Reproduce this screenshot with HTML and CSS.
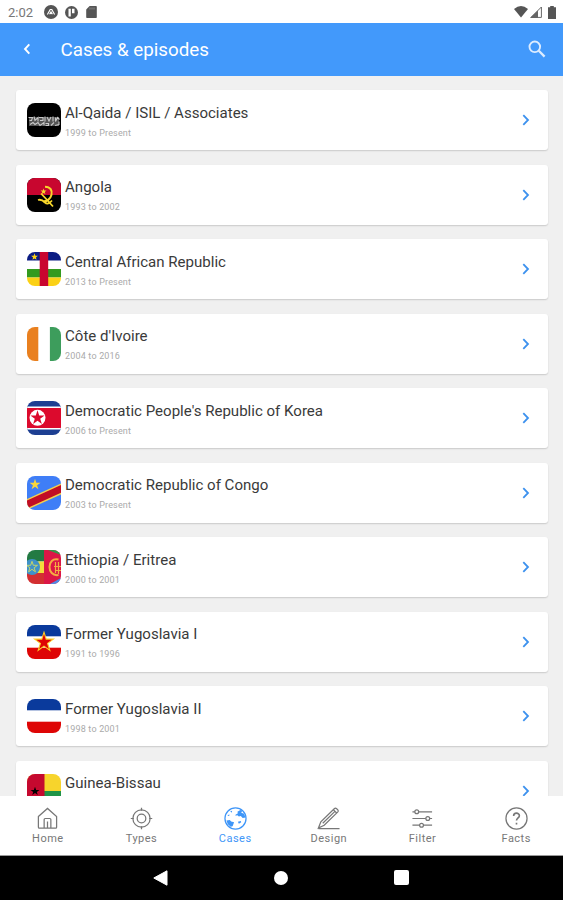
FILE: index.html
```
<!DOCTYPE html>
<html lang="en">
<head>
  <meta charset="UTF-8" />
  <meta name="viewport" content="width=device-width, initial-scale=1.0"/>
  <title>Cases &amp; episodes</title>
  <link rel="stylesheet" href="styles.css">
</head>
<body>
  <div class="app">
    <!-- Status bar -->
    <div class="status-bar">
      <span class="time">2:02</span>
      <svg class="status-icon" width="14" height="14" viewBox="0 0 14 14">
        <circle cx="7" cy="7" r="7" fill="#555"/>
        <path d="M3.400 9.500 6.200 4.500h1.600l2.800 5M5.600 9.300 7 7l1.400 2.300" fill="none" stroke="#fff" stroke-width="1.200"/>
      </svg>
      <svg class="status-icon" width="13" height="13" viewBox="0 0 13 13">
        <circle cx="6.500" cy="6.500" r="6.500" fill="#555"/>
        <path d="M3.500 2.800h2.300v7.700H3.500zM7 2.800h2.500v4.400H7z" fill="#fff"/>
      </svg>
      <svg class="status-icon" width="11" height="12" viewBox="0 0 11 12">
        <path d="M3.600 0H10a.8.8 0 0 1 .8.8v10.400a.8.8 0 0 1-.8.8H1a.8.8 0 0 1-.8-.8V3.500z" fill="#555"/>
        <path d="M4 1.500v2M6 1.500v2M8 1.500v2" stroke="#999" stroke-width=".8"/>
      </svg>
      <div class="status-right">
        <svg width="14" height="12" viewBox="0 0 14 12"><path d="M0 3Q7-3 14 3L7 11.500z" fill="#555"/></svg>
        <svg width="12" height="12" viewBox="0 0 12 12">
          <path d="M11.400 1v10.400H1z" fill="none" stroke="#666" stroke-width="1"/>
          <path d="M8 4.500V12H0z" fill="#666"/>
        </svg>
        <svg width="8" height="13" viewBox="0 0 8 13"><path d="M2.200 0h3.600v1.200H8V13H0V1.200h2.200z" fill="#555"/></svg>
      </div>
    </div>

    <header class="header">
      <svg class="back" width="8" height="12" viewBox="0 0 8 12"><path d="M6.300 1.300 2 6l4.300 4.700" fill="none" stroke="#fff" stroke-width="1.900"/></svg>
      <h1>Cases &amp; episodes</h1>
      <svg class="search" width="18" height="18" viewBox="0 0 18 18" fill="none" stroke="#dcecff">
        <circle cx="6.800" cy="6.800" r="5.300" stroke-width="1.900"/>
        <path d="m10.800 10.800 5.800 5.800" stroke-width="2.300"/>
      </svg>
    </header>

    <main class="list">
      <div class="card">
        <svg class="flag" viewBox="0 0 34 34">
          <rect width="34" height="34" fill="#000"/>
          <rect x="2" y="14" width="30" height="9" fill="#555"/>
          <g fill="none" stroke="#c8c8c8" stroke-width="1.100">
            <path d="M1.500 14.500h4l-1 3h-2M7 13.500l1 4 3-3v4M12 14.500h4v3h-3M18 13.500v5M20 14l2 4 2-4M26 13.500v5M28.500 14.500v4l2-4 2 2"/>
            <path d="M3 21.500l3-2 2 2 3-2 2 3 4-3v3M18.500 20.500h3v2h-3M24 22.500l3-3M28 22.500l4-1v-3"/>
          </g>
        </svg>
        <div class="info"><h2>Al-Qaida / ISIL / Associates</h2><p>1999 to Present</p></div>
        <svg class="chevron" viewBox="0 0 8 12"><path d="m1.300 1.200 4.700 4.800-4.700 4.800"/></svg>
      </div>

      <div class="card">
        <svg class="flag" viewBox="0 0 34 34">
          <rect width="34" height="34" fill="#000"/>
          <rect width="34" height="17" fill="#c8062f"/>
          <path d="M18 8.700c5.500 0 7.500 4 6.500 8s-4.500 7-8 6.500" fill="none" stroke="#f8d62a" stroke-width="2"/>
          <path d="M14 15.500l9 9.500M11 22c3-1 5 .5 7 2.500s4.500 1 7-2M21 23l5 5.500" fill="none" stroke="#f8d62a" stroke-width="1.800"/>
          <path d="m16.500 10.500.8 2 2.200.1-1.700 1.400.6 2.100-1.900-1.200-1.800 1.200.6-2.100-1.700-1.400 2.200-.1z" fill="#f8d62a"/>
        </svg>
        <div class="info"><h2>Angola</h2><p>1993 to 2002</p></div>
        <svg class="chevron" viewBox="0 0 8 12"><path d="m1.300 1.200 4.700 4.800-4.700 4.800"/></svg>
      </div>

      <div class="card">
        <svg class="flag" viewBox="0 0 34 34">
          <rect width="34" height="34" fill="#fff"/>
          <rect width="34" height="8.500" fill="#0b1c83"/>
          <rect y="17" width="34" height="8.500" fill="#339a1f"/>
          <rect y="25.500" width="34" height="8.500" fill="#fbd116"/>
          <rect x="12.700" width="8.500" height="34" fill="#c9052f"/>
          <path d="m7.500 1.300.9 2.400 2.500.1-2 1.600.7 2.400-2.100-1.400-2.100 1.400.7-2.400-2-1.600 2.500-.1z" fill="#fbd116"/>
        </svg>
        <div class="info"><h2>Central African Republic</h2><p>2013 to Present</p></div>
        <svg class="chevron" viewBox="0 0 8 12"><path d="m1.300 1.200 4.700 4.800-4.700 4.800"/></svg>
      </div>

      <div class="card">
        <svg class="flag" viewBox="0 0 34 34">
          <rect width="34" height="34" fill="#fff"/>
          <rect width="11.300" height="34" fill="#e9801f"/>
          <rect x="22.900" width="11.100" height="34" fill="#3d9d5c"/>
        </svg>
        <div class="info"><h2>Côte d'Ivoire</h2><p>2004 to 2016</p></div>
        <svg class="chevron" viewBox="0 0 8 12"><path d="m1.300 1.200 4.700 4.800-4.700 4.800"/></svg>
      </div>

      <div class="card">
        <svg class="flag" viewBox="0 0 34 34">
          <rect width="34" height="34" fill="#1d3f92"/>
          <rect y="5.500" width="34" height="23" fill="#fff"/>
          <rect y="7" width="34" height="20" fill="#dc0a2d"/>
          <circle cx="10.500" cy="16.800" r="8" fill="#fff"/>
          <path d="m10.500 9.300 1.700 5.200h5.400l-4.400 3.200 1.700 5.200-4.400-3.200-4.400 3.200 1.700-5.200-4.400-3.200h5.400z" fill="#dc0a2d"/>
        </svg>
        <div class="info"><h2>Democratic People's Republic of Korea</h2><p>2006 to Present</p></div>
        <svg class="chevron" viewBox="0 0 8 12"><path d="m1.300 1.200 4.700 4.800-4.700 4.800"/></svg>
      </div>

      <div class="card">
        <svg class="flag" viewBox="0 0 34 34">
          <rect width="34" height="34" fill="#3f7ef7"/>
          <path d="M-2 29.300 36 12" stroke="#f3d04e" stroke-width="10"/>
          <path d="M-2 29.300 36 12" stroke="#c10d25" stroke-width="7"/>
          <path d="m8 2.800 1.300 4h4.200l-3.400 2.500 1.300 4-3.400-2.500-3.400 2.500 1.300-4-3.400-2.500h4.200z" fill="#f9d63c"/>
        </svg>
        <div class="info"><h2>Democratic Republic of Congo</h2><p>2003 to Present</p></div>
        <svg class="chevron" viewBox="0 0 8 12"><path d="m1.300 1.200 4.700 4.800-4.700 4.800"/></svg>
      </div>

      <div class="card">
        <svg class="flag" viewBox="0 0 34 34">
          <rect width="17" height="11.500" fill="#237a43"/>
          <rect y="11.500" width="17" height="11.500" fill="#f4dc3c"/>
          <rect y="23" width="17" height="11" fill="#d32f31"/>
          <circle cx="5" cy="17" r="8" fill="#3f92c9"/>
          <path d="m5 11.300 1.300 4h4.200l-3.400 2.500 1.300 4-3.400-2.500-3.400 2.500 1.300-4-3.400-2.500h4.200z" fill="none" stroke="#c5d56a"/>
          <rect x="17" width="17" height="34" fill="#db1746"/>
          <path d="M21 0h13v5z" fill="#319b49"/>
          <path d="M34 28v6H23z" fill="#4b8dea"/>
          <path d="M31.500 9.500c-12-3-12 17.500 0 15.500" fill="none" stroke="#f4ad42" stroke-width="2"/>
          <path d="M28.500 12v11M31.500 12v12M27 16.500h7M28 20.500h6" stroke="#f4ad42" stroke-width="1.200"/>
        </svg>
        <div class="info"><h2>Ethiopia / Eritrea</h2><p>2000 to 2001</p></div>
        <svg class="chevron" viewBox="0 0 8 12"><path d="m1.300 1.200 4.700 4.800-4.700 4.800"/></svg>
      </div>

      <div class="card">
        <svg class="flag" viewBox="0 0 34 34">
          <rect width="34" height="34" fill="#fff"/>
          <rect width="34" height="11.300" fill="#0a3a9c"/>
          <rect y="22.700" width="34" height="11.300" fill="#de0505"/>
          <path d="m17 7.200 2.200 6.900h7.200l-5.800 4.300 2.200 7-5.800-4.300-5.800 4.300 2.200-7-5.800-4.300h7.200z" fill="#de0505" stroke="#fbcf2a" stroke-width="1.100"/>
        </svg>
        <div class="info"><h2>Former Yugoslavia I</h2><p>1991 to 1996</p></div>
        <svg class="chevron" viewBox="0 0 8 12"><path d="m1.300 1.200 4.700 4.800-4.700 4.800"/></svg>
      </div>

      <div class="card">
        <svg class="flag" viewBox="0 0 34 34">
          <rect width="34" height="34" fill="#fff"/>
          <rect width="34" height="11.300" fill="#0a3a9c"/>
          <rect y="22.700" width="34" height="11.300" fill="#de0505"/>
        </svg>
        <div class="info"><h2>Former Yugoslavia II</h2><p>1998 to 2001</p></div>
        <svg class="chevron" viewBox="0 0 8 12"><path d="m1.300 1.200 4.700 4.800-4.700 4.800"/></svg>
      </div>

      <div class="card">
        <svg class="flag" viewBox="0 0 34 34">
          <rect width="34" height="17" fill="#f7d42c"/>
          <rect y="17" width="34" height="17" fill="#1f9447"/>
          <rect width="17.500" height="34" fill="#c5092f"/>
          <path d="m8 12.700 1.100 3.200h3.400l-2.700 2 1 3.200L8 19.100l-2.800 2 1-3.200-2.700-2h3.400z" fill="#000"/>
        </svg>
        <div class="info"><h2>Guinea-Bissau</h2></div>
        <svg class="chevron" viewBox="0 0 8 12"><path d="m1.300 1.200 4.700 4.800-4.700 4.800"/></svg>
      </div>
    </main>

    <!-- Bottom tabs -->
    <nav class="tabs">
      <a class="tab">
        <svg viewBox="0 0 24 24"><path d="M2.500 10 12 1.500 21.500 10v11a1 1 0 0 1-1 1h-17a1 1 0 0 1-1-1z"/><path d="M8.500 22v-9a1 1 0 0 1 1-1h5a1 1 0 0 1 1 1v9M12 15v7"/></svg>
        <span>Home</span>
      </a>
      <a class="tab">
        <svg viewBox="0 0 24 24"><circle cx="12" cy="12" r="9"/><circle cx="12" cy="12" r="4.500"/><path d="M12 .8V4M12 20v3.200M.8 12H4M20 12h3.200"/></svg>
        <span>Types</span>
      </a>
      <a class="tab active">
        <svg viewBox="0 0 24 24">
          <circle cx="12" cy="12" r="11"/>
          <path class="land" d="M12 8l2.500-1.500L14 5l3-2 2 1-1 2 3 1 1.500 4-3 .5-2-2-2 .5-1.500-1.500-2 .5zM2.500 14l3.500-.5 1.500 1.500 3 1-1.500 4-2 .5-3-2.500zM14.500 15.500l3-1 .5 1.500-2.500 1.500zM6.500 4.500l2-.5-.5 2zM3.500 9l2-1.500v2z"/>
        </svg>
        <span>Cases</span>
      </a>
      <a class="tab">
        <svg viewBox="0 0 24 24"><path d="M1.500 22 4 15.500 18 1.800a1.800 1.800 0 0 1 2.500 0l1 1a1.800 1.800 0 0 1 0 2.500L7.500 19zM6 17 19 4.300M17 2.800l3.500 3.500M1.500 22.500h22"/></svg>
        <span>Design</span>
      </a>
      <a class="tab">
        <svg viewBox="0 0 24 24"><path d="M1.500 5H4M8 5h14M1.500 12h14M19.500 12H22M1.500 19H9M13 19h9"/><circle cx="6" cy="5" r="2"/><circle cx="17.500" cy="12" r="2"/><circle cx="11" cy="19" r="2"/></svg>
        <span>Filter</span>
      </a>
      <a class="tab">
        <svg viewBox="0 0 24 24"><circle cx="12" cy="12" r="11"/><path d="M9 9.300c0-3.800 6-3.800 6-.2 0 2.200-3 2.400-3 5.100M12 16.500v1.800" stroke-width="1.700"/></svg>
        <span>Facts</span>
      </a>
    </nav>

    <!-- Android buttons -->
    <div class="system-nav">
      <svg width="15" height="16" viewBox="0 0 15 16"><path d="M14 .8v14.400L.8 8z" fill="#fff" stroke="#fff" stroke-linejoin="round"/></svg>
      <span class="circle"></span>
      <span class="square"></span>
    </div>
  </div>
</body>
</html>
```
FILE: styles.css
```
/* ===== Base Styles ===== */
* {
  margin: 0;
  padding: 0;
  box-sizing: border-box;
}
body {
  font-family: Roboto, sans-serif;
  background: #f0f0f0;
  color: #3a3a3a;
}
svg {
  display: block;
  flex-shrink: 0;
}
.app {
  display: flex;
  flex-direction: column;
  height: 100vh;
  overflow: hidden;
}

/* ===== Status Bar ===== */
.status-bar {
  display: flex;
  align-items: center;
  height: 23px;
  padding: 1px 7px 0 8px;
  background: #fff;
  flex-shrink: 0;
}
.time {
  width: 35.500px;
  font-size: 13px;
  color: #777;
}
.status-icon {
  margin-right: 7.500px;
}
.status-right {
  display: flex;
  align-items: center;
  gap: 2px;
  margin-left: auto;
}
.status-right svg:last-child {
  margin-left: 4px;
}

/* ===== Header ===== */
.header {
  display: flex;
  align-items: center;
  height: 52.500px;
  padding: 0 17.500px 0 23px;
  background: #4299fb;
  flex-shrink: 0;
}
.header h1 {
  margin-left: 29.500px;
  padding-top: 1px;
  font-size: 18.800px;
  font-weight: 400;
  color: #fff;
}
.search {
  margin-left: auto;
  margin-bottom: 1px;
}

/* ===== Case List ===== */
.list {
  display: flex;
  flex-direction: column;
  gap: 14.55px;
  flex: 1;
  min-height: 0;
  padding: 14.500px 15.500px 0 15.500px;
  overflow: hidden;
}
.card {
  display: flex;
  align-items: center;
  height: 60px;
  padding: 0 18px 0 11px;
  background: #fff;
  border-radius: 3px;
  box-shadow: 0 1px 1.500px rgba(0,0,0,0.16);
  flex-shrink: 0;
}
.flag {
  width: 34px;
  height: 34px;
  border-radius: 8px;
}
.info {
  height: 35px;
  margin-left: 4.500px;
}
.info h2 {
  font-size: 15.050px;
  line-height: 20px;
  font-weight: 400;
  white-space: nowrap;
}
.info p {
  margin-top: 4px;
  font-size: 9px;
  line-height: 12px;
  letter-spacing: 0.180px;
  color: #aaa;
}
.chevron {
  width: 8px;
  height: 12px;
  margin-left: auto;
  fill: none;
  stroke: #3c91ee;
  stroke-width: 1.800;
}

/* ===== Tabs ===== */
.tabs {
  display: flex;
  height: 60px;
  padding-left: 1px;
  background: #fff;
  border-bottom: 1px solid #999;
  flex-shrink: 0;
}
.tab {
  display: flex;
  flex-direction: column;
  align-items: center;
  flex: 1;
  padding-top: 11px;
  font-size: 11px;
  line-height: 14px;
  letter-spacing: 0.5px;
  color: #777;
}
.tab svg {
  width: 23px;
  height: 23px;
  margin-bottom: 2px;
  fill: none;
  stroke: currentColor;
  stroke-width: 1.300;
}
.tab.active {
  color: #3f96f8;
}
.tab .land {
  fill: currentColor;
  stroke: none;
}

/* ===== System Navigation ===== */
.system-nav {
  display: flex;
  align-items: center;
  justify-content: center;
  gap: 106px;
  height: 44.500px;
  padding-right: 1px;
  background: #000;
  flex-shrink: 0;
}
.circle {
  width: 14px;
  height: 14px;
  border-radius: 50%;
  background: #fff;
}
.square {
  width: 15px;
  height: 15px;
  border-radius: 2px;
  background: #fff;
}
```
